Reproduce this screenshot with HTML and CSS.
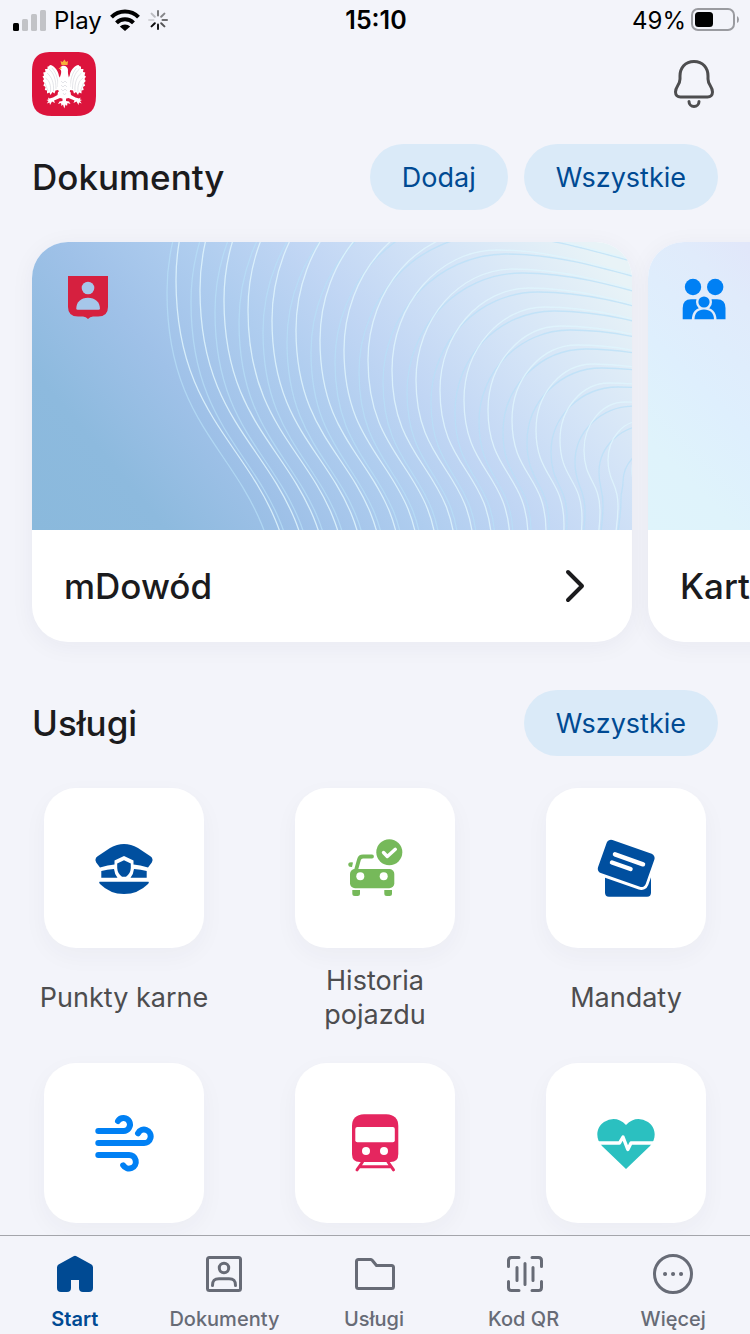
FILE: index.html
```html
<!DOCTYPE html>
<html lang="pl">
<head>
	<meta charset="UTF-8">
	<meta name="viewport" content="width=device-width, initial-scale=1.0">
	<link rel="stylesheet" href="styles.css">
	<title>mObywatel</title>
</head>
<body>
	<div class="status">
		<div class="status-left">
			<svg width="33" height="21" viewBox="0 0 33 21">
				<rect x="0" y="13" width="6" height="8" rx="1.5" fill="#000"/>
				<rect x="9" y="9" width="6" height="12" rx="1.5" fill="#c2c3c7"/>
				<rect x="18" y="4" width="6" height="17" rx="1.5" fill="#c2c3c7"/>
				<rect x="27" y="0" width="6" height="21" rx="1.5" fill="#c2c3c7"/>
			</svg>
			<span>Play</span>
			<svg width="30" height="22" viewBox="0 0 30 22">
				<g fill="none" stroke="#000" stroke-width="4">
					<path d="M1.500 8.200A19 19 0 0 1 28.500 8.200"/>
					<path d="M6.500 13.800A12 12 0 0 1 23.500 13.800"/>
				</g>
				<path d="M15 22L9.800 17.500A7.500 7.500 0 0 1 20.200 17.500Z" fill="#000"/>
			</svg>
			<svg width="20" height="20" viewBox="-10 -10 20 20" stroke-width="2" stroke-linecap="round" stroke="#000">
				<path d="M0 -4.500V-9" opacity=".5"/>
				<path d="M3.200 -3.200L6.400 -6.400" opacity=".45"/>
				<path d="M4.500 0H9" opacity=".55"/>
				<path d="M3.200 3.200L6.400 6.400" opacity=".65"/>
				<path d="M0 4.500V9" opacity=".9"/>
				<path d="M-3.200 3.200L-6.400 6.400" opacity=".95"/>
				<path d="M-4.500 0H-9" opacity=".12"/>
				<path d="M-3.200 -3.200L-6.400 -6.400" opacity=".22"/>
			</svg>
		</div>
		<b class="time">15:10</b>
		<div class="status-right">
			<span>49%</span>
			<svg width="48" height="24" viewBox="0 0 48 24">
				<rect x="1" y="1" width="42" height="21" rx="6" fill="none" stroke="#9a9ba0" stroke-width="2"/>
				<rect x="4" y="4" width="18" height="15" rx="3.500" fill="#000"/>
				<path d="M46 8Q48 9 48 11.500T46 15Z" fill="#9a9ba0"/>
			</svg>
		</div>
	</div>

	<header class="top">
		<svg class="logo" viewBox="0 0 64 64">
			<path d="M32 0H44C58 0 64 5 64 20V44C64 58 58 64 44 64H20C6 64 0 58 0 44V20C0 5 6 0 20 0Z" fill="#dc143c"/>
			<defs>
				<g id="wing">
					<path fill="#fff" d="M31 26C28 27 27 25 26.500 22C25.500 18 22 13.500 18 13C17 14 16.500 14.500 15.500 14.500L15.500 17L13 17L13.500 20L11.200 20.500L12 23.500L10.500 24.500L12 27L10.800 29L12.500 31L11.300 33.500L13.500 35L12.800 38L15 38.500L15 41.500L17.500 40.500L18.500 43L20.500 40L22.500 41.500L23.500 38.500L26 38L31 40Z"/>
					<path fill="#fff" d="M26 40L25.500 43L21 45.500L17.500 46.500L16 45.500L16.500 47.500L14.500 48L16.500 49L14.800 51.500L17.500 50.500L18 53L20 49.500L23 51L22 48.500L28 46L32 47V38Z"/>
					<path fill="none" stroke="#c6c8d0" stroke-width=".5" d="M17 17C22 21 24 28 24 37M15 21C20 25 22 31 21.500 39M13.500 26C18 29 19 34 18.500 40M13 31L16 39M20 16C25 22 26 28 26 35"/>
				</g>
			</defs>
			<use href="#wing"/>
			<use href="#wing" transform="translate(64.500) scale(-1 1)"/>
			<path fill="#fff" d="M30 14C27.500 15 27.500 17 29 18.500C30 22 27 26 26 32C25.500 39 28 43 30.500 46L30.500 49L27.500 49.500L26 52L29 51L29.500 54L31 52.500L32.300 56.500L33.600 52.500L35 54L35.500 51L38.500 52L37 49.500L34 49L34 46C37 43 39 39 38.500 32C37.500 26 35.500 23 36 18C36 15 33 13 30 14Z"/>
			<path fill="none" stroke="#c9cbd2" stroke-width=".5" d="M29 29l2 2 2-2 2 2M29 33l2 2 2-2 2 2M29 37l2 2 2-2 2 2M31 41l1.500 2 1.500-2"/>
			<path fill="#f7b239" d="M29.500 13L28.500 9L30.500 10L32.500 7.500L34 10L36 9L35.500 13ZM29 14.500L26.500 17L29.500 17Z"/>
		</svg>
		<button class="bell" aria-label="Powiadomienia">
			<svg width="44" height="52" viewBox="0 0 44 52" fill="none" stroke="#4d4d4f" stroke-width="3" stroke-linecap="round">
				<path d="M22 3.500C13 3.500 8 10 8 18V21C8 27 3.500 28.500 3.500 34C3.500 37 5.500 39 8.500 39H35.500C38.500 39 40.500 37 40.500 34C40.500 28.500 36 27 36 21V18C36 10 31 3.500 22 3.500Z"/>
				<path d="M17 43.500A5 5 0 0 0 27 43.500"/>
			</svg>
		</button>
	</header>

	<main>
		<section>
			<div class="head">
				<h2>Dokumenty</h2>
				<button class="pill">Dodaj</button>
				<button class="pill">Wszystkie</button>
			</div>
			<div class="cards">
				<a class="card" href="#">
					<div class="cover blue">
						<svg class="waves" id="waves" viewBox="0 0 600 288" preserveAspectRatio="none"></svg>
						<svg class="emblem" viewBox="0 0 44 44">
							<path fill="#d6203f" d="M2 0H42V31Q42 40.500 32 40.500H27Q24 40.500 22 43Q20 40.500 17 40.500H12Q2 40.500 2 31Z"/>
							<circle cx="22" cy="12" r="6.300" fill="#a6c7ea"/>
							<path fill="#a6c7ea" d="M10.300 32.500C10.300 26 15 21.700 22 21.700S33.900 26 33.900 32.500Q33.900 33.700 32.700 33.700H11.500Q10.300 33.700 10.300 32.500Z"/>
						</svg>
					</div>
					<div class="card-foot">
						<span>mDowód</span>
						<svg width="22" height="36" viewBox="0 0 22 36"><path d="M4 4L18 18L4 32" fill="none" stroke="#1b1b1d" stroke-width="4" stroke-linecap="round" stroke-linejoin="round"/></svg>
					</div>
				</a>
				<a class="card" href="#">
					<div class="cover pale">
						<svg class="emblem" viewBox="0 0 44 44" fill="#0080f4">
							<circle cx="11" cy="11" r="8.200"/>
							<circle cx="33.200" cy="11" r="8.200"/>
							<path d="M.7 43.300V32Q.7 23.300 9 23.300H35Q43.500 23.300 43.500 32V43.300Z"/>
							<path d="M15 20H29V24H15Z" fill="#e1ebfa"/>
							<path d="M9.800 44C9.800 36 14 31.200 22 31.200S34.500 36 34.500 44Z" fill="#e1ebfa"/>
							<circle cx="22" cy="26" r="8" fill="#e1ebfa"/>
							<circle cx="22" cy="26" r="5.600"/>
							<path d="M12.500 43.300C12.500 37 16 33.400 22 33.400S32 37 32 43.300Z"/>
						</svg>
					</div>
					<div class="card-foot"><span>Karta</span></div>
				</a>
			</div>
		</section>

		<section>
			<div class="head">
				<h2>Usługi</h2>
				<button class="pill">Wszystkie</button>
			</div>
			<div class="services">
				<a class="service" href="#">
					<span class="tile">
						<svg viewBox="0 0 60 60" fill="#004f9f">
							<path d="M6 29.500L2.200 24.500Q0 20.500 4 18L16 10Q30 2 44 10L56 18Q60 20.500 57.800 24.500L54 29.500Q46 27 39.500 26.500V22.500L30 18L20.500 22.500V26.500Q14 27 6 29.500Z"/>
							<path d="M7.300 33Q13 31.300 20 31Q20.500 36 23.500 39.700H7.300ZM52.700 33Q47 31.300 40 31Q39.500 36 36.500 39.700H52.700Z"/>
							<path d="M30 22.300L36.800 25.500V30Q36.500 35.500 32 38.700H28Q23.500 35.500 23.200 30V25.500Z"/>
							<path d="M5.500 43.700H54.500Q55.500 44.500 54 46Q44 56 30 56T6 46Q4.500 44.500 5.500 43.700Z"/>
						</svg>
					</span>
					<span class="label">Punkty karne</span>
				</a>
				<a class="service" href="#">
					<span class="tile">
						<svg viewBox="0 0 60 60" fill="#76b95a">
							<circle cx="44.300" cy="14.300" r="13"/>
							<path d="M38.500 14.500L42.300 18.500L50.300 11.300" fill="none" stroke="#fff" stroke-width="3.400" stroke-linecap="round" stroke-linejoin="round"/>
							<path d="M27 18.500H18Q14.800 18.500 14 21.500L10.500 34" fill="none" stroke="#76b95a" stroke-width="3.800" stroke-linecap="round"/>
							<path d="M8 24.500L7 29Q3.300 29.300 3.300 26.500T8 24.500Z"/>
							<rect x="5" y="31" width="44.300" height="19.300" rx="5"/>
							<circle cx="15.300" cy="38.300" r="4" fill="#fff"/>
							<circle cx="38.700" cy="38.300" r="4" fill="#fff"/>
							<path d="M7.300 52H15V55.500Q15 58 12.500 58H9.800Q7.300 58 7.300 55.500ZM39.300 52H47V55.500Q47 58 44.500 58H41.800Q39.300 58 39.300 55.500Z"/>
						</svg>
					</span>
					<span class="label">Historia pojazdu</span>
				</a>
				<a class="service" href="#">
					<span class="tile">
						<svg viewBox="0 0 60 60">
							<path d="M9 38H55V54.500Q55 58.700 51 58.700H13Q9 58.700 9 54.500Z" fill="#004f9f"/>
							<g transform="rotate(19.500 30.200 25.400)">
								<rect x="2.200" y="5.400" width="56" height="40.500" rx="7.500" fill="#fff"/>
								<rect x="4.900" y="7.900" width="50.600" height="35" rx="4.500" fill="#004f9f"/>
							</g>
							<path d="M19 16.300L47 26.300M16 24.500L34.500 31" stroke="#fff" stroke-width="4.500" stroke-linecap="round"/>
						</svg>
					</span>
					<span class="label">Mandaty</span>
				</a>
				<a class="service" href="#" aria-label="Jakość powietrza">
					<span class="tile">
						<svg viewBox="0 0 60 60" fill="none" stroke="#0080f4" stroke-width="6" stroke-linecap="round">
							<path d="M4.300 18H29.200A6.500 6.500 0 1 0 24 8"/>
							<path d="M4.300 30H49.300A6.700 6.700 0 1 0 44 20.300"/>
							<path d="M4.300 42H34.500A6.800 6.800 0 1 1 29.200 52.300"/>
						</svg>
					</span>
				</a>
				<a class="service" href="#" aria-label="Bilety kolejowe">
					<span class="tile">
						<svg viewBox="0 0 60 60">
							<path fill="#e5265f" d="M19 1.300H41.300Q53.300 2 53.300 13V41Q53.300 49 45.500 49H14.800Q7 49 7 41V13Q7 2 19 1.300Z"/>
							<rect x="10.300" y="14" width="39.500" height="15.300" rx="2" fill="#fff"/>
							<circle cx="21" cy="38" r="4" fill="#fff"/>
							<circle cx="39" cy="38" r="4" fill="#fff"/>
							<path d="M17.500 49L12 56.800M43 49L48.500 56.800M14.500 53.800H46" stroke="#e5265f" stroke-width="3" stroke-linecap="round"/>
						</svg>
					</span>
				</a>
				<a class="service" href="#" aria-label="Zdrowie">
					<span class="tile">
						<svg viewBox="0 0 60 60">
							<path fill="#2bc0c0" d="M30 56L6 33C-1 26 0 14 8 9Q20 2 30 12Q40 2 52 9C60 14 61 26 54 33Z"/>
							<path d="M0 30H23.500L27 24L31.800 36.500L35 30H60" fill="none" stroke="#fff" stroke-width="3.400" stroke-linejoin="round"/>
						</svg>
					</span>
				</a>
			</div>
		</section>
	</main>

	<nav class="tabs">
		<a class="tab active" href="#">
			<svg viewBox="0 0 44 44">
				<path d="M20.500 4.200Q22 3.200 23.500 4.200L38.500 12.600Q40 13.500 40 15.500V36Q40 40 36 40H30Q26 40 26 36V28H18V36Q18 40 14 40H8Q4 40 4 36V15.500Q4 13.500 5.500 12.600Z"/>
			</svg>
			Start
		</a>
		<a class="tab" href="#">
			<svg viewBox="0 0 44 44">
				<rect x="5.500" y="5.500" width="33" height="33" rx="2"/>
				<circle cx="22" cy="16" r="4.700"/>
				<path d="M10.500 33.500C10.500 28.500 12.500 26.800 17 26.800H27C31.500 26.800 33.500 28.500 33.500 33.500"/>
			</svg>
			Dokumenty
		</a>
		<a class="tab" href="#">
			<svg viewBox="0 0 44 44">
				<path d="M6.500 7.500H18.500Q19.500 7.500 20.200 8.200L24.500 13.500H39.500Q41.500 13.500 41.500 15.500V34.500Q41.500 36.500 39.500 36.500H6.500Q4.500 36.500 4.500 34.500V9.500Q4.500 7.500 6.500 7.500Z"/>
			</svg>
			Usługi
		</a>
		<a class="tab" href="#">
			<svg viewBox="0 0 44 44">
				<path d="M6.500 14.500V8.500Q6.500 5.500 9.500 5.500H17M30 5.500H36.500Q39.500 5.500 39.500 8.500V14.500M39.500 29.500V35.500Q39.500 38.500 36.500 38.500H30M17 38.500H9.500Q6.500 38.500 6.500 35.500V29.500M15 15.500V28.500M23 11.500V32.500M31 15.500V28.500"/>
			</svg>
			Kod QR
		</a>
		<a class="tab" href="#">
			<svg viewBox="0 0 44 44">
				<circle cx="22" cy="22" r="18.500"/>
				<path d="M14 22h.1M22 22h.1M30 22h.1" stroke-width="4"/>
			</svg>
			Więcej
		</a>
	</nav>

	<script>
		// guilloche on the ID card: two sets of lines, each shrinking towards the right edge
		function line(k,dx,dy,mx){
			let tx=321+16*k-dx, ty=-163+19*k+4*(dx!=0)
			let lx=144+24*k+dx, ly=38+10*k+dy
			let bx=262+18*k+mx, by=380-6.5*k
			let c=0.55, half=(by-ly)/2
			return `M${tx+170} ${ty+34}C${tx+90} ${ty+12} ${tx+50} ${ty} ${tx} ${ty}`
				+`C${tx-(tx-lx)*c} ${ty} ${lx} ${ly-(ly-ty)*c} ${lx} ${ly}`
				+`C${lx} ${ly+half} ${bx} ${by-half} ${bx} ${by}`
				+`q0 20 -6 50`
		}
		let text=""
		for(let k=0;k<20;k++){
			text+=`<path class="soft" d="${line(k,-9,12,-15)}"/><path class="bright" d="${line(k,0,0,0)}"/>`
		}
		document.getElementById("waves").innerHTML=text
	</script>
</body>
</html>
```
FILE: styles.css
```css
*{
	box-sizing:border-box;
}
body{
	margin:0;
	height:100vh;
	display:flex;
	flex-direction:column;
	overflow:hidden;
	background:#f3f4fa;
	color:#1b1b1d;
	font-family:Inter, "Noto Sans", sans-serif;
}
a{
	color:inherit;
	text-decoration:none;
}
button{
	border:0;
	padding:0;
	background:none;
	font:inherit;
}
svg{
	display:block;
	flex:none;
}

.status{
	display:grid;
	grid-template-columns:1fr auto 1fr;
	align-items:center;
	height:40px;
	padding:0 11px 0 13px;
	color:#000;
	font-size:24px;
}
.status-left, .status-right{
	display:flex;
	align-items:center;
	gap:8px;
}
.status-right{
	justify-content:flex-end;
	gap:5px;
}
.time{
	font-size:25px;
	font-weight:600;
}

.top{
	display:flex;
	justify-content:space-between;
	align-items:center;
	padding:12px 34px 0 32px;
}
.logo{
	width:64px;
	height:64px;
}

main{
	flex:1;
	min-height:0;
	overflow:hidden;
	padding-top:28px;
}
.head{
	display:flex;
	align-items:center;
	gap:16px;
	padding:0 32px;
}
h2{
	flex:1;
	margin:0;
	font-size:35px;
	font-weight:500;
}
.pill{
	height:66px;
	padding:0 32px;
	border-radius:33px;
	background:#daeaf8;
	color:#004a93;
	font-size:27px;
}

.cards{
	display:flex;
	gap:16px;
	padding:32px 32px 48px;
}
.card{
	flex:none;
	width:80vw;
	border-radius:36px;
	overflow:hidden;
	background:#fff;
	box-shadow:0 4px 24px rgba(40,40,80,.05);
}
.cover{
	position:relative;
	height:288px;
	padding:34px;
}
.blue{
	background:linear-gradient(50deg,#8ab9dc 0%,#8dbade 16%,#9fc1e8 32%,#afcdef 47%,#c1d6f4 60%,#d4e4f7 76%,#e8f3f7 95%);
}
.pale{
	background:linear-gradient(45deg,#dff4fb 0%,#dff3fb 10%,#deeffd 22%,#e0ebfb 36%,#e2e3f9 50%,#e2e3f9 100%);
}
.waves{
	position:absolute;
	inset:0;
	width:100%;
	height:100%;
}
.waves path{
	fill:none;
	stroke-width:1.3;
}
.waves .bright{
	stroke:#dff4fd;
	opacity:.85;
}
.waves .soft{
	stroke:#b8dff8;
	opacity:.7;
}
.emblem{
	position:relative;
	width:44px;
	height:44px;
}
.card-foot{
	display:flex;
	align-items:center;
	justify-content:space-between;
	height:112px;
	padding:0 46px 0 32px;
	font-size:35px;
	font-weight:500;
}

.services{
	display:grid;
	grid-template-columns:repeat(3,1fr);
	gap:31px 51px;
	padding:32px 24px;
}
.service{
	display:flex;
	flex-direction:column;
	align-items:center;
	gap:16px;
}
.tile{
	display:grid;
	place-items:center;
	width:160px;
	height:160px;
	border-radius:32px;
	background:#fff;
	box-shadow:0 8px 24px rgba(40,40,80,.04);
}
.tile svg{
	width:60px;
	height:60px;
}
.label{
	display:flex;
	align-items:center;
	max-width:170px;
	min-height:68px;
	color:#4d4d4f;
	font-size:27px;
	line-height:34px;
	text-align:center;
}

.tabs{
	display:flex;
	flex:none;
	height:99px;
	padding:16px 2px 0 0;
	border-top:1px solid #a4a5ab;
	background:#f3f4fa;
}
.tab{
	flex:1;
	display:flex;
	flex-direction:column;
	align-items:center;
	gap:11px;
	color:#676b76;
	font-size:20px;
	font-weight:500;
	line-height:24px;
}
.tab svg{
	width:44px;
	height:44px;
	fill:none;
	stroke:#676b76;
	stroke-width:3;
	stroke-linecap:round;
	stroke-linejoin:round;
}
.active{
	color:#004a93;
	font-weight:600;
}
.active svg{
	fill:#004a93;
	stroke:none;
}
```
